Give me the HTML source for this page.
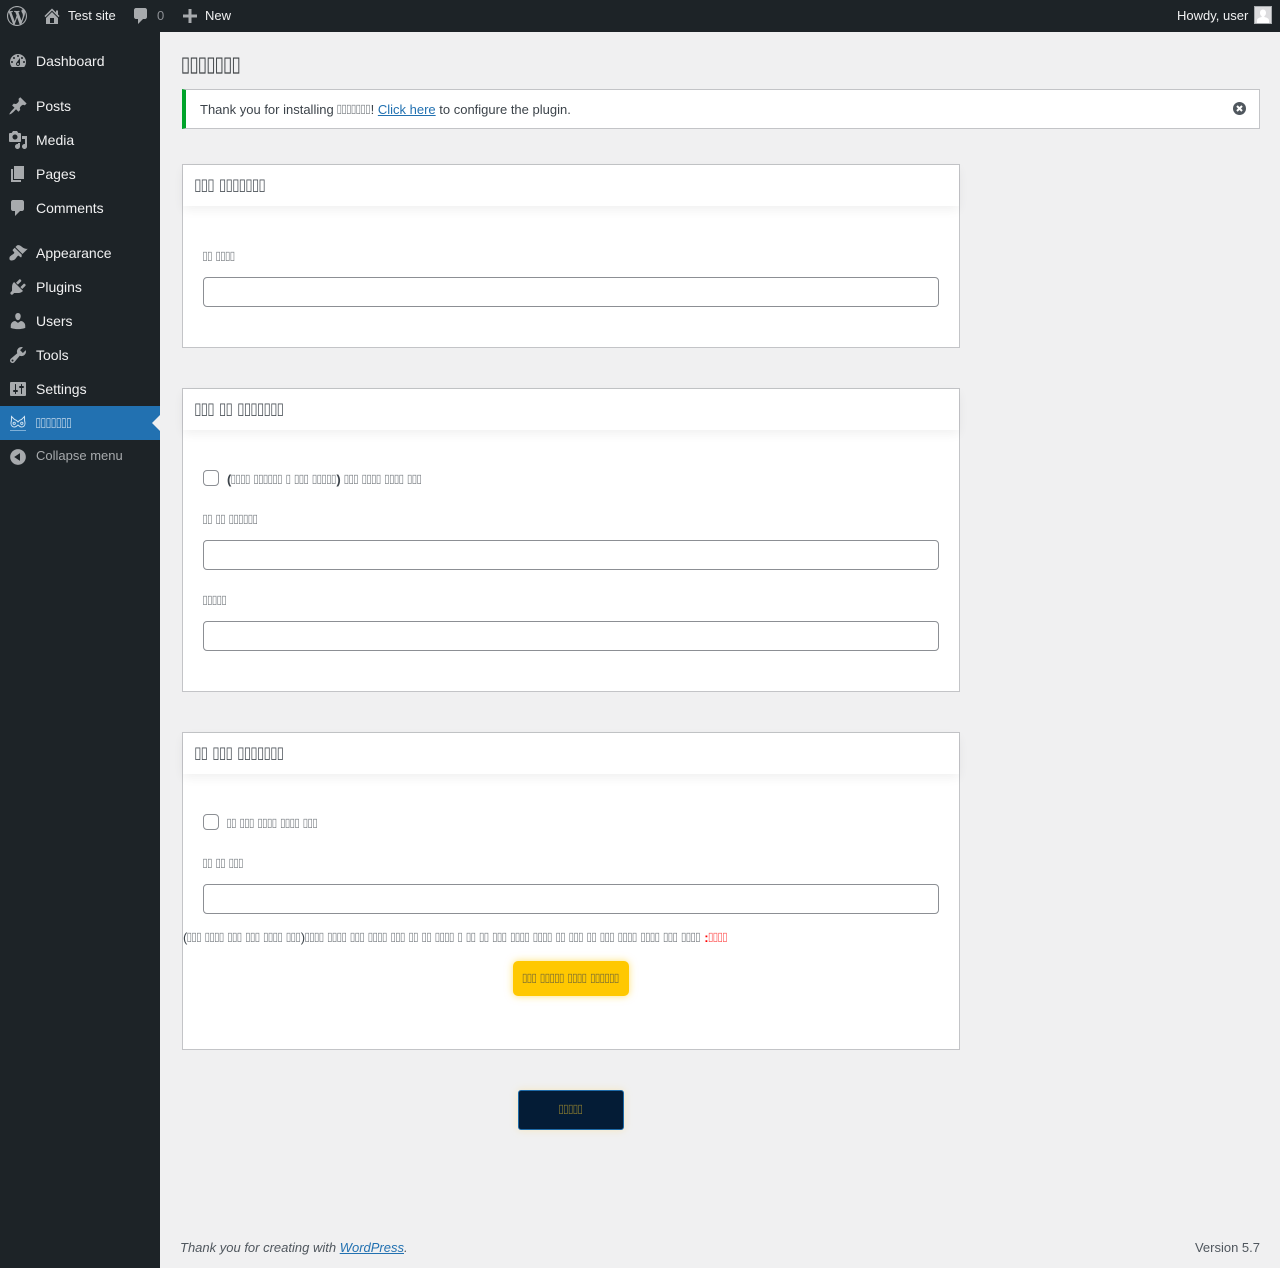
<!DOCTYPE html>
<html><head><meta charset="utf-8"><title>Settings</title>
<style>
html,body{margin:0;padding:0}
body{width:1280px;height:1268px;position:relative;overflow:hidden;background:#f0f0f1;font-family:"Liberation Sans",sans-serif;color:#3c434a;font-size:13px}
.a{position:absolute;white-space:pre}
svg{position:absolute;display:block}
#bar{position:absolute;left:0;top:0;width:1280px;height:32px;background:#1d2327}
#side{position:absolute;left:0;top:32px;width:160px;height:1236px;background:#1d2327}
.m{position:absolute;left:36px;color:#f0f0f1;font-size:14px;line-height:18px;white-space:pre}
.i{fill:#a7aaad}
.b{color:#f0f0f1;font-size:13px;line-height:16px;top:8px}
.card{position:absolute;left:182px;width:776px;background:#fff;border:1px solid #c3c4c7}
.hd{position:absolute;left:0;top:0;width:776px;height:41px;background:#fff;box-shadow:0 4px 10px rgba(0,0,0,.06)}
.t{position:absolute;left:12px;top:10px;font-size:18px;line-height:20px;color:#3c434a;white-space:pre}
.l{position:absolute;left:20px;font-size:13px;line-height:16px;color:#3c434a;white-space:pre}
.in{position:absolute;left:20px;width:734px;height:28px;border:1px solid #8c8f94;border-radius:4px;background:#fff}
.cb{position:absolute;left:20px;width:14px;height:14px;border:1px solid #8c8f94;border-radius:4px;background:#fff}
.q{display:inline-block;font-family:"DejaVu Sans",sans-serif;font-size:.75em;letter-spacing:-.062em;word-spacing:.118em;position:relative;left:-.07em;top:-.18em;transform:scaleY(1.22);opacity:.72}
.t .q{opacity:.9}
</style></head><body>
<div id="bar">
<svg style="left:7px;top:6px" width="20" height="20" viewBox="0 0 20 20"><path class="i" d="M20 10c0-5.51-4.49-10-10-10C4.48 0 0 4.49 0 10c0 5.52 4.48 10 10 10 5.51 0 10-4.48 10-10zM7.78 15.37L4.37 6.22c.55-.02 1.17-.08 1.17-.08.5-.06.44-1.13-.06-1.11 0 0-1.45.11-2.37.11-.18 0-.37 0-.58-.01C4.12 2.69 6.87 1.11 10 1.11c2.33 0 4.45.87 6.05 2.34-.68-.11-1.65.39-1.65 1.58 0 .74.45 1.36.9 2.1.35.61.55 1.36.55 2.46 0 1.49-1.4 5-1.4 5l-3.03-8.37c.54-.02.82-.17.82-.17.5-.05.44-1.25-.06-1.22 0 0-1.44.12-2.38.12-.87 0-2.33-.12-2.33-.12-.5-.03-.56 1.2-.06 1.22l.92.08 1.26 3.41zM17.41 10c.24-.64.74-1.87.43-4.25.7 1.29 1.05 2.71 1.05 4.25 0 3.29-1.73 6.24-4.4 7.78.97-2.59 1.94-5.2 2.92-7.78zM6.1 18.09C3.12 16.65 1.11 13.53 1.11 10c0-1.3.23-2.48.72-3.59C3.25 10.3 4.67 14.2 6.1 18.09zm4.03-6.63l2.58 6.98c-.86.29-1.76.45-2.71.45-.79 0-1.57-.11-2.29-.33.81-2.38 1.62-4.74 2.42-7.1z"/></svg>
<svg style="left:42px;top:6px" width="20" height="20" viewBox="0 0 20 20"><path class="i" d="M16 8.5l1.53 1.53-1.06 1.06L10 4.62l-6.47 6.47-1.06-1.06L10 2.5l4 4v-2h2v4zm-6-2.46l6 5.99V18H4v-5.97zM12 17v-5H8v5h4z"/></svg>
<div class="a b" style="left:68px">Test site</div>
<svg style="left:131px;top:6px" width="20" height="20" viewBox="0 0 20 20"><path class="i" d="M5 2h9c1.1 0 2 .9 2 2v7c0 1.1-.9 2-2 2h-2l-5 5v-5H5c-1.1 0-2-.9-2-2V4c0-1.1.9-2 2-2z"/></svg>
<div class="a b" style="left:157px;color:#8c8f94">0</div>
<svg style="left:183px;top:9px" width="14" height="14" viewBox="0 0 14 14"><path class="i" d="M5.5 0h3v5.5H14v3H8.500V14h-3V8.500H0v-3h5.500z"/></svg>
<div class="a b" style="left:205px">New</div>
<div class="a b" style="left:1177px">Howdy, user</div>
<svg style="left:1254px;top:6px" width="18" height="18" viewBox="0 0 18 18"><rect x=".5" y=".5" width="17" height="17" fill="#dcdcde" stroke="#a7aaad"/><path fill="#fff" d="M9 3.500c1.900 0 3 1.500 3 3.400 0 1.500-.7 2.700-1.700 3.300v.8c2.500.5 4.700 1.500 4.700 3.500v2.500H3v-2.500c0-2 2.200-3 4.700-3.500v-.8C6.700 9.600 6 8.400 6 6.900 6 5 7.100 3.500 9 3.500z"/></svg>
</div>

<div id="side">
<svg style="left:8px;top:19px" width="20" height="20" viewBox="0 0 20 20"><path class="i" d="M3.760 16h12.480c1.100-1.370 1.760-3.110 1.760-5 0-4.420-3.580-8-8-8s-8 3.580-8 8c0 1.890.66 3.630 1.760 5zM10 4c.55 0 1 .45 1 1s-.45 1-1 1-1-.45-1-1 .45-1 1-1zM6 6c.55 0 1 .45 1 1s-.45 1-1 1-1-.45-1-1 .45-1 1-1zm8 0c.55 0 1 .45 1 1s-.45 1-1 1-1-.45-1-1 .45-1 1-1zm-5.370 5.550L12 7v6c0 1.100-.9 2-2 2s-2-.9-2-2c0-.57.24-1.080.63-1.450zM4 10c.55 0 1 .45 1 1s-.45 1-1 1-1-.45-1-1 .45-1 1-1zm12 0c.55 0 1 .45 1 1s-.45 1-1 1-1-.45-1-1 .45-1 1-1zm-5 3c0-.55-.45-1-1-1s-1 .45-1 1 .45 1 1 1 1-.45 1-1z" fill-rule="evenodd"/></svg>
<div class="m" style="top:20px">Dashboard</div>
<svg style="left:8px;top:64px" width="20" height="20" viewBox="0 0 20 20"><path class="i" d="M10.440 3.020l1.820-1.820 6.360 6.350-1.830 1.820c-1.050-.68-2.480-.57-3.410.36l-.75.75c-.92.93-1.040 2.350-.35 3.410l-1.830 1.820-2.410-2.410-2.800 2.790c-.42.42-3.380 2.710-3.800 2.290s1.860-3.390 2.280-3.810l2.790-2.790L4.100 9.360l1.830-1.820c1.050.69 2.480.57 3.400-.36l.75-.75c.93-.92 1.050-2.350.36-3.410z"/></svg>
<div class="m" style="top:65px">Posts</div>
<svg style="left:8px;top:98px" width="20" height="20" viewBox="0 0 20 20"><path class="i" d="M13 11V4c0-.55-.45-1-1-1h-1.670L9 1H5L3.670 3H2c-.55 0-1 .45-1 1v7c0 .55.45 1 1 1h10c.55 0 1-.45 1-1zM7 4.500c1.380 0 2.500 1.120 2.500 2.500S8.380 9.500 7 9.500 4.500 8.380 4.500 7 5.620 4.500 7 4.500zM14 6h5v10.500c0 1.380-1.120 2.500-2.500 2.500S14 17.880 14 16.500s1.120-2.500 2.500-2.500c.17 0 .34.02.5.05V9h-3V6zm-4 8.050V13h2v3.500c0 1.380-1.120 2.500-2.500 2.500S7 17.880 7 16.500 8.120 14 9.500 14c.17 0 .34.02.5.05z"/></svg>
<div class="m" style="top:99px">Media</div>
<svg style="left:8px;top:132px" width="20" height="20" viewBox="0 0 20 20"><path class="i" d="M6 15V2h10v13H6zm-1 1h8v2H3V5h2v11z"/></svg>
<div class="m" style="top:133px">Pages</div>
<svg style="left:8px;top:166px" width="20" height="20" viewBox="0 0 20 20"><path class="i" d="M5 2h9c1.100 0 2 .9 2 2v7c0 1.100-.9 2-2 2h-2l-5 5v-5H5c-1.100 0-2-.9-2-2V4c0-1.100.9-2 2-2z"/></svg>
<div class="m" style="top:167px">Comments</div>
<svg style="left:8px;top:211px" width="20" height="20" viewBox="0 0 20 20"><path class="i" d="M14.480 11.060L7.410 3.990l1.500-1.500c.5-.56 2.300-.47 3.510.32 1.210.8 1.430 1.280 2.910 2.100 1.180.64 2.450 1.260 4.450.85zm-.71.71L6.700 4.700 4.930 6.470c-.39.39-.39 1.020 0 1.410l1.060 1.060c.39.39.39 1.030 0 1.420-.6.6-1.430 1.110-2.210 1.690-.35.26-.7.53-1.010.84C1.430 13.230.91 15.950 1.980 17c1.080 1.060 3.830.51 5.160-.82.31-.31.58-.65.84-1.010.57-.78 1.080-1.610 1.700-2.220.39-.39 1.020-.39 1.410 0l1.060 1.060c.39.39 1.020.39 1.410 0z"/></svg>
<div class="m" style="top:212px">Appearance</div>
<svg style="left:8px;top:245px" width="20" height="20" viewBox="0 0 20 20"><path class="i" d="M13.110 4.360L9.870 7.600 8 5.730l3.240-3.240c.35-.34 1.050-.2 1.560.32.52.51.66 1.210.31 1.550zm-8 1.770l.91-1.120 9.010 9.010-1.190.84c-.71.71-2.630 1.160-3.820 1.160H6.140L4.900 17.260c-.59.59-1.540.59-2.120 0-.59-.58-.59-1.530 0-2.120l1.240-1.240v-3.880c0-1.130.4-3.190 1.090-3.890zm7.260 3.970l3.240-3.240c.34-.35 1.040-.21 1.550.31.52.51.66 1.210.31 1.550l-3.240 3.250z"/></svg>
<div class="m" style="top:246px">Plugins</div>
<svg style="left:8px;top:279px" width="20" height="20" viewBox="0 0 20 20"><path class="i" d="M10 9.250c-2.270 0-2.730-3.440-2.730-3.440C7 4.020 7.820 2 9.970 2c2.160 0 2.980 2.020 2.710 3.810 0 0-.41 3.440-2.680 3.440zm0 2.570L12.720 10c2.390 0 4.520 2.330 4.520 4.530v2.490s-3.650 1.130-7.240 1.130c-3.650 0-7.240-1.130-7.240-1.130v-2.490c0-2.250 1.940-4.480 4.470-4.480z"/></svg>
<div class="m" style="top:280px">Users</div>
<svg style="left:8px;top:313px" width="20" height="20" viewBox="0 0 20 20"><path class="i" d="M16.680 9.770c-1.340 1.340-3.300 1.670-4.950.99l-5.410 6.520c-.99.99-2.590.99-3.580 0s-.99-2.590 0-3.570l6.520-5.420c-.68-1.650-.35-3.610.99-4.950 1.280-1.280 3.120-1.620 4.720-1.060l-2.890 2.890 2.820 2.820 2.860-2.870c.53 1.580.18 3.390-1.080 4.650zM3.810 16.210c.4.39 1.040.39 1.430 0 .4-.4.4-1.040 0-1.430-.39-.4-1.030-.4-1.430 0-.39.39-.39 1.030 0 1.430z"/></svg>
<div class="m" style="top:314px">Tools</div>
<svg style="left:8px;top:347px" width="20" height="20" viewBox="0 0 20 20"><path class="i" fill-rule="evenodd" d="M18 16V4c0-.55-.45-1-1-1H3c-.55 0-1 .45-1 1v12c0 .55.45 1 1 1h14c.55 0 1-.45 1-1zM8 11h1c.55 0 1 .45 1 1s-.45 1-1 1H8v1.500c0 .28-.22.5-.5.5s-.5-.22-.5-.5V13H6c-.55 0-1-.45-1-1s.45-1 1-1h1V5.500c0-.28.22-.5.5-.5s.5.22.5.5V11zm5-2h-1c-.55 0-1-.45-1-1s.45-1 1-1h1V5.500c0-.28.22-.5.5-.5s.5.22.5.5V7h1c.55 0 1 .45 1 1s-.45 1-1 1h-1v5.500c0 .28-.22.5-.5.5s-.5-.22-.5-.5V9z"/></svg>
<div class="m" style="top:348px">Settings</div>
<div style="position:absolute;left:0;top:374px;width:160px;height:34px;background:#2271b1"></div>
<div style="position:absolute;left:152px;top:383px;width:0;height:0;border:8px solid transparent;border-left:0;border-right:8px solid #f0f0f1"></div>
<svg style="left:9px;top:382px" width="18" height="18" viewBox="0 0 18 18"><path fill="none" stroke="#d4e5f3" stroke-width="1" d="M2.500 2.500L5.500 5.500C7 5.800 8 6.700 9 8c1-1.300 2-2.200 3.500-2.500l3-3 .1 4.500c.7 1.700.5 3.900-.7 5.100-1.500 1.300-3.600 1.100-4.800-.2L9 11l-1.100.9c-1.200 1.300-3.300 1.500-4.800.2-1.200-1.200-1.400-3.400-.7-5.100z"/><circle cx="5.200" cy="9.300" r="1.600" fill="#d4e5f3"/><circle cx="12.800" cy="9.300" r="1.600" fill="#d4e5f3"/><circle cx="5.200" cy="9.300" r=".7" fill="#2271b1"/><circle cx="12.800" cy="9.300" r=".7" fill="#2271b1"/><rect x="1" y="16" width="16" height="1" fill="#7fb0d8"/></svg>
<div class="m" style="top:382px;color:#fff;font-size:14px"><span class="q">▯▯▯▯▯▯▯</span></div>
<svg style="left:8px;top:415px" width="20" height="20" viewBox="0 0 20 20"><path class="i" d="M10 2.160c4.330 0 7.840 3.510 7.840 7.840s-3.510 7.840-7.840 7.840S2.160 14.330 2.160 10 5.710 2.160 10 2.160zm2 11.720V6.120L6.180 9.970z"/></svg>
<div class="m" style="top:415px;font-size:13px;color:#a7aaad">Collapse menu</div>
</div>

<div class="a" style="left:182px;top:51px;font-size:23px;line-height:28px;color:#1d2327"><span class="q" style="opacity:.85">▯▯▯▯▯▯▯</span></div>
<div style="position:absolute;left:182px;top:89px;width:1073px;height:38px;background:#fff;border:1px solid #c3c4c7;border-left:4px solid #00a32a"></div>
<div class="a" style="left:200px;top:102px;line-height:16px">Thank you for installing <span class="q">▯▯▯▯▯▯▯</span>! <span style="color:#2271b1;text-decoration:underline">Click here</span> to configure the plugin.</div>
<svg style="left:1232px;top:101px" width="15" height="15" viewBox="0 0 15 15"><circle cx="7.500" cy="7.500" r="6.500" fill="#50575e"/><path d="M5 5l5 5M10 5l-5 5" stroke="#fff" stroke-width="2"/></svg>

<div class="card" style="top:164px;height:182px"><div class="hd"></div><div class="t"><span class="q">▯▯▯ ▯▯▯▯▯▯▯</span></div>
<div class="l" style="top:84px"><span class="q">▯▯ ▯▯▯▯</span></div>
<div class="in" style="top:112px"></div></div>

<div class="card" style="top:388px;height:302px"><div class="hd"></div><div class="t"><span class="q">▯▯▯ ▯▯ ▯▯▯▯▯▯▯</span></div>
<div class="cb" style="top:81px"></div>
<div class="l" style="left:44px;top:83px"><b>(</b><span class="q">▯▯▯▯ ▯▯▯▯▯▯ ▯ ▯▯▯ ▯▯▯▯▯</span><b>)</b> <span class="q">▯▯▯ ▯▯▯▯ ▯▯▯▯ ▯▯▯</span></div>
<div class="l" style="top:123px"><span class="q">▯▯ ▯▯ ▯▯▯▯▯▯</span></div>
<div class="in" style="top:151px"></div>
<div class="l" style="top:204px"><span class="q">▯▯▯▯▯</span></div>
<div class="in" style="top:232px"></div></div>

<div class="card" style="top:732px;height:316px"><div class="hd"></div><div class="t"><span class="q">▯▯ ▯▯▯ ▯▯▯▯▯▯▯</span></div>
<div class="cb" style="top:81px"></div>
<div class="l" style="left:44px;top:83px"><span class="q">▯▯ ▯▯▯ ▯▯▯▯ ▯▯▯▯ ▯▯▯</span></div>
<div class="l" style="top:123px"><span class="q">▯▯ ▯▯ ▯▯▯</span></div>
<div class="in" style="top:151px"></div>
<div class="l" style="left:0;top:197px">(<span class="q">▯▯▯ ▯▯▯▯ ▯▯▯ ▯▯▯ ▯▯▯▯ ▯▯▯</span>)<span class="q">▯▯▯▯ ▯▯▯▯ ▯▯▯ ▯▯▯▯ ▯▯▯ ▯▯ ▯▯ ▯▯▯▯ ▯ ▯▯ ▯▯ ▯▯▯ ▯▯▯▯ ▯▯▯▯ ▯▯ ▯▯▯ ▯▯ ▯▯▯ ▯▯▯▯ ▯▯▯▯ ▯▯▯ ▯▯▯▯</span> <b style="color:#f00">:</b><span class="q" style="color:#f00">▯▯▯▯</span></div>
<div style="position:absolute;left:330px;top:228px;width:116px;height:35px;background:#ffc800;border-radius:5px;box-shadow:0 0 8px rgba(255,200,0,.55);text-align:center;font-size:13px;line-height:35px;color:#3c434a;white-space:pre"><span class="q">▯▯▯ ▯▯▯▯▯ ▯▯▯▯ ▯▯▯▯▯▯</span></div>
</div>

<div style="position:absolute;left:518px;top:1090px;width:104px;height:38px;background:#041c36;border:1px solid #1e6aa8;border-radius:3px;box-shadow:0 0 8px rgba(255,215,100,.35);text-align:center;font-size:13px;line-height:38px;color:#c9a92c;white-space:pre"><span class="q">▯▯▯▯▯</span></div>

<div class="a" style="left:180px;top:1240px;line-height:16px;font-style:italic;color:#50575e">Thank you for creating with <span style="color:#2271b1;text-decoration:underline">WordPress</span>.</div>
<div class="a" style="right:20px;top:1240px;line-height:16px;color:#50575e">Version 5.7</div>
</body></html>
